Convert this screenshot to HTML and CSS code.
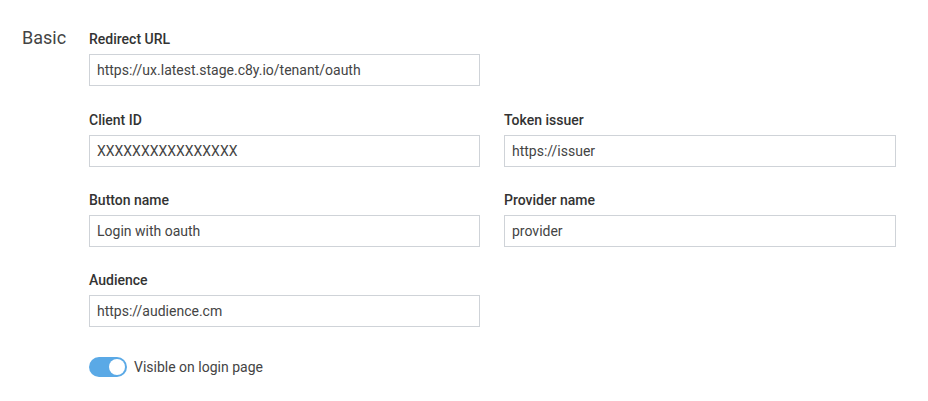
FILE: index.html
```html
<!DOCTYPE html>
<html>
<head>
<meta charset="utf-8">
<link rel="stylesheet" href="styles.css">
</head>
<body>
<section class="section">
  <h2 class="legend">Basic</h2>
  <div class="fields">
    <div class="grid">
      <div class="field first">
        <label class="label">Redirect URL</label>
        <div class="input">https://ux.latest.stage.c8y.io/tenant/oauth</div>
      </div>
      <div class="field first"></div>
      <div class="field">
        <label class="label">Client ID</label>
        <div class="input">XXXXXXXXXXXXXXXX</div>
      </div>
      <div class="field">
        <label class="label">Token issuer</label>
        <div class="input">https://issuer</div>
      </div>
      <div class="field">
        <label class="label">Button name</label>
        <div class="input">Login with oauth</div>
      </div>
      <div class="field">
        <label class="label">Provider name</label>
        <div class="input">provider</div>
      </div>
      <div class="field">
        <label class="label">Audience</label>
        <div class="input">https://audience.cm</div>
      </div>
    </div>
    <div class="toggle-row">
      <span class="switch"><span class="knob"></span></span>
      <span class="toggle-label">Visible on login page</span>
    </div>
  </div>
</section>
</body>
</html>
```
FILE: styles.css
```css
html, body {
  margin: 0;
  padding: 0;
  background: #fff;
  font-family: Roboto, "Liberation Sans", sans-serif;
}
.section {
  display: flex;
  padding: 26px 0 0 22px;
}
.legend {
  margin: 0;
  width: 67px;
  font-size: 18px;
  font-weight: 400;
  line-height: 24px;
  color: #444;
}
.fields {
  display: flex;
  flex-direction: column;
}
.grid {
  display: grid;
  grid-template-columns: 391px 392px;
  column-gap: 24px;
  row-gap: 25px;
  padding-top: 5px;
}
.field {
  display: flex;
  flex-direction: column;
}
.field.first {
  margin-bottom: 1px;
}
.label {
  font-size: 14px;
  font-weight: 500;
  line-height: 16px;
  color: #333;
  margin-bottom: 7px;
}
.input {
  box-sizing: border-box;
  height: 32px;
  border: 1px solid #cfd3d8;
  padding: 0 7px;
  font-size: 14px;
  line-height: 30px;
  color: #444;
  white-space: nowrap;
}
.toggle-row {
  display: flex;
  align-items: center;
  gap: 7px;
  margin-top: 30px;
}
.switch {
  box-sizing: border-box;
  width: 38px;
  height: 20px;
  border-radius: 10px;
  background: #5aa9e6;
  display: flex;
  align-items: center;
  justify-content: flex-end;
  padding-right: 2px;
}
.knob {
  width: 16px;
  height: 16px;
  border-radius: 50%;
  background: #fff;
}
.toggle-label {
  font-size: 14px;
  color: #444;
}
```
